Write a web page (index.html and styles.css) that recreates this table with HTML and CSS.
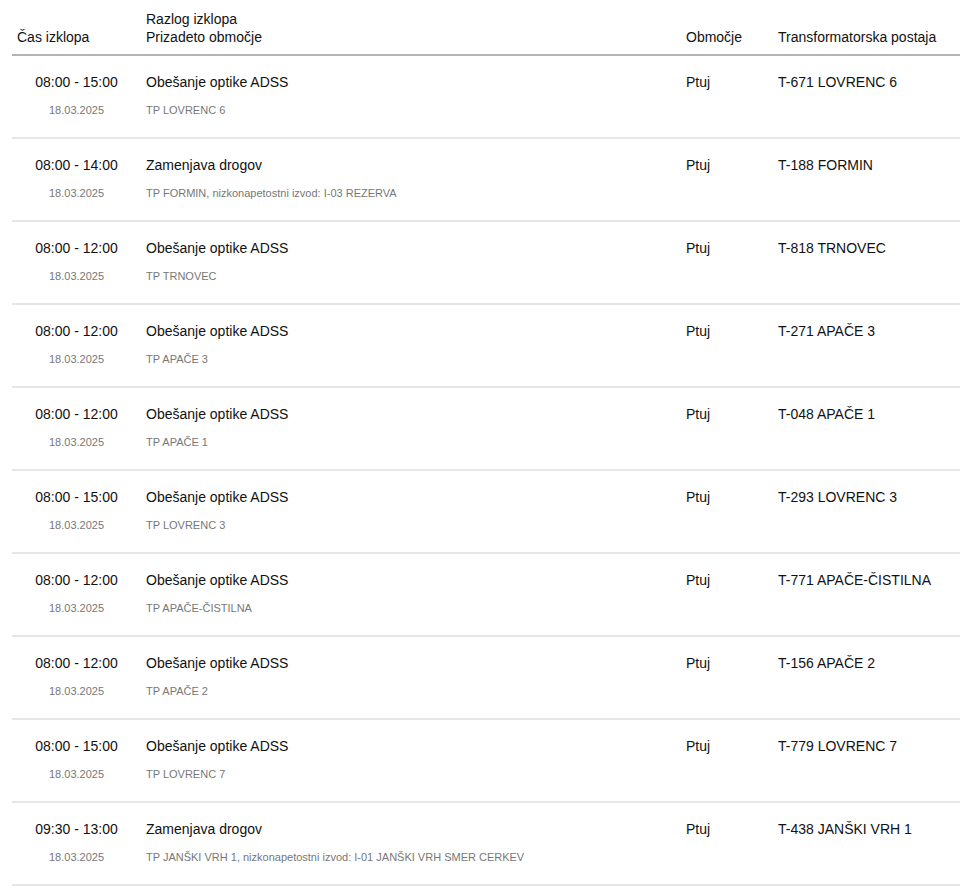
FILE: index.html
```html
<!DOCTYPE html>
<html lang="sl">
<head>
<meta charset="utf-8">
<title>Izklopi</title>
<link rel="stylesheet" href="styles.css">
</head>
<body>
<table class="outages">
  <colgroup>
    <col class="c-time">
    <col class="c-reason">
    <col class="c-area">
    <col class="c-station">
  </colgroup>
  <thead>
    <tr>
      <th>Čas izklopa</th>
      <th>Razlog izklopa<br>Prizadeto območje</th>
      <th>Območje</th>
      <th>Transformatorska postaja</th>
    </tr>
  </thead>
  <tbody>
    <tr>
      <td class="time"><div class="main">08:00 - 15:00</div><div class="sub">18.03.2025</div></td>
      <td><div class="main">Obešanje optike ADSS</div><div class="sub">TP LOVRENC 6</div></td>
      <td><div class="main">Ptuj</div></td>
      <td><div class="main">T-671 LOVRENC 6</div></td>
    </tr>
    <tr>
      <td class="time"><div class="main">08:00 - 14:00</div><div class="sub">18.03.2025</div></td>
      <td><div class="main">Zamenjava drogov</div><div class="sub">TP FORMIN, nizkonapetostni izvod: I-03 REZERVA</div></td>
      <td><div class="main">Ptuj</div></td>
      <td><div class="main">T-188 FORMIN</div></td>
    </tr>
    <tr>
      <td class="time"><div class="main">08:00 - 12:00</div><div class="sub">18.03.2025</div></td>
      <td><div class="main">Obešanje optike ADSS</div><div class="sub">TP TRNOVEC</div></td>
      <td><div class="main">Ptuj</div></td>
      <td><div class="main">T-818 TRNOVEC</div></td>
    </tr>
    <tr>
      <td class="time"><div class="main">08:00 - 12:00</div><div class="sub">18.03.2025</div></td>
      <td><div class="main">Obešanje optike ADSS</div><div class="sub">TP APAČE 3</div></td>
      <td><div class="main">Ptuj</div></td>
      <td><div class="main">T-271 APAČE 3</div></td>
    </tr>
    <tr>
      <td class="time"><div class="main">08:00 - 12:00</div><div class="sub">18.03.2025</div></td>
      <td><div class="main">Obešanje optike ADSS</div><div class="sub">TP APAČE 1</div></td>
      <td><div class="main">Ptuj</div></td>
      <td><div class="main">T-048 APAČE 1</div></td>
    </tr>
    <tr>
      <td class="time"><div class="main">08:00 - 15:00</div><div class="sub">18.03.2025</div></td>
      <td><div class="main">Obešanje optike ADSS</div><div class="sub">TP LOVRENC 3</div></td>
      <td><div class="main">Ptuj</div></td>
      <td><div class="main">T-293 LOVRENC 3</div></td>
    </tr>
    <tr>
      <td class="time"><div class="main">08:00 - 12:00</div><div class="sub">18.03.2025</div></td>
      <td><div class="main">Obešanje optike ADSS</div><div class="sub">TP APAČE-ČISTILNA</div></td>
      <td><div class="main">Ptuj</div></td>
      <td><div class="main">T-771 APAČE-ČISTILNA</div></td>
    </tr>
    <tr>
      <td class="time"><div class="main">08:00 - 12:00</div><div class="sub">18.03.2025</div></td>
      <td><div class="main">Obešanje optike ADSS</div><div class="sub">TP APAČE 2</div></td>
      <td><div class="main">Ptuj</div></td>
      <td><div class="main">T-156 APAČE 2</div></td>
    </tr>
    <tr>
      <td class="time"><div class="main">08:00 - 15:00</div><div class="sub">18.03.2025</div></td>
      <td><div class="main">Obešanje optike ADSS</div><div class="sub">TP LOVRENC 7</div></td>
      <td><div class="main">Ptuj</div></td>
      <td><div class="main">T-779 LOVRENC 7</div></td>
    </tr>
    <tr>
      <td class="time"><div class="main">09:30 - 13:00</div><div class="sub">18.03.2025</div></td>
      <td><div class="main">Zamenjava drogov</div><div class="sub">TP JANŠKI VRH 1, nizkonapetostni izvod: I-01 JANŠKI VRH SMER CERKEV</div></td>
      <td><div class="main">Ptuj</div></td>
      <td><div class="main">T-438 JANŠKI VRH 1</div></td>
    </tr>
  </tbody>
</table>
</body>
</html>
```
FILE: styles.css
```css
html, body {
  margin: 0;
  padding: 0;
  background: #ffffff;
}

body {
  font-family: "Liberation Sans", Arial, sans-serif;
  font-size: 14px;
  color: #111111;
}

.outages {
  margin-left: 12px;
  width: 948px;
  border-collapse: collapse;
  table-layout: fixed;
}

.c-time { width: 129px; }
.c-reason { width: 540px; }
.c-area { width: 92px; }
.c-station { width: 187px; }

.outages th {
  text-align: left;
  font-weight: normal;
  vertical-align: bottom;
  line-height: 18px;
  padding: 10px 5px 8px 5px;
  border-bottom: 2px solid #b4b4b4;
  white-space: nowrap;
}

.outages td {
  vertical-align: top;
  padding: 18px 5px 20px 5px;
  border-bottom: 2px solid #e6e6e6;
  white-space: nowrap;
  height: 43px;
}

.outages td.time {
  text-align: center;
}

.main {
  line-height: 16px;
}

.sub {
  margin-top: 14px;
  font-size: 11px;
  line-height: 13px;
  color: #777777;
}
```
